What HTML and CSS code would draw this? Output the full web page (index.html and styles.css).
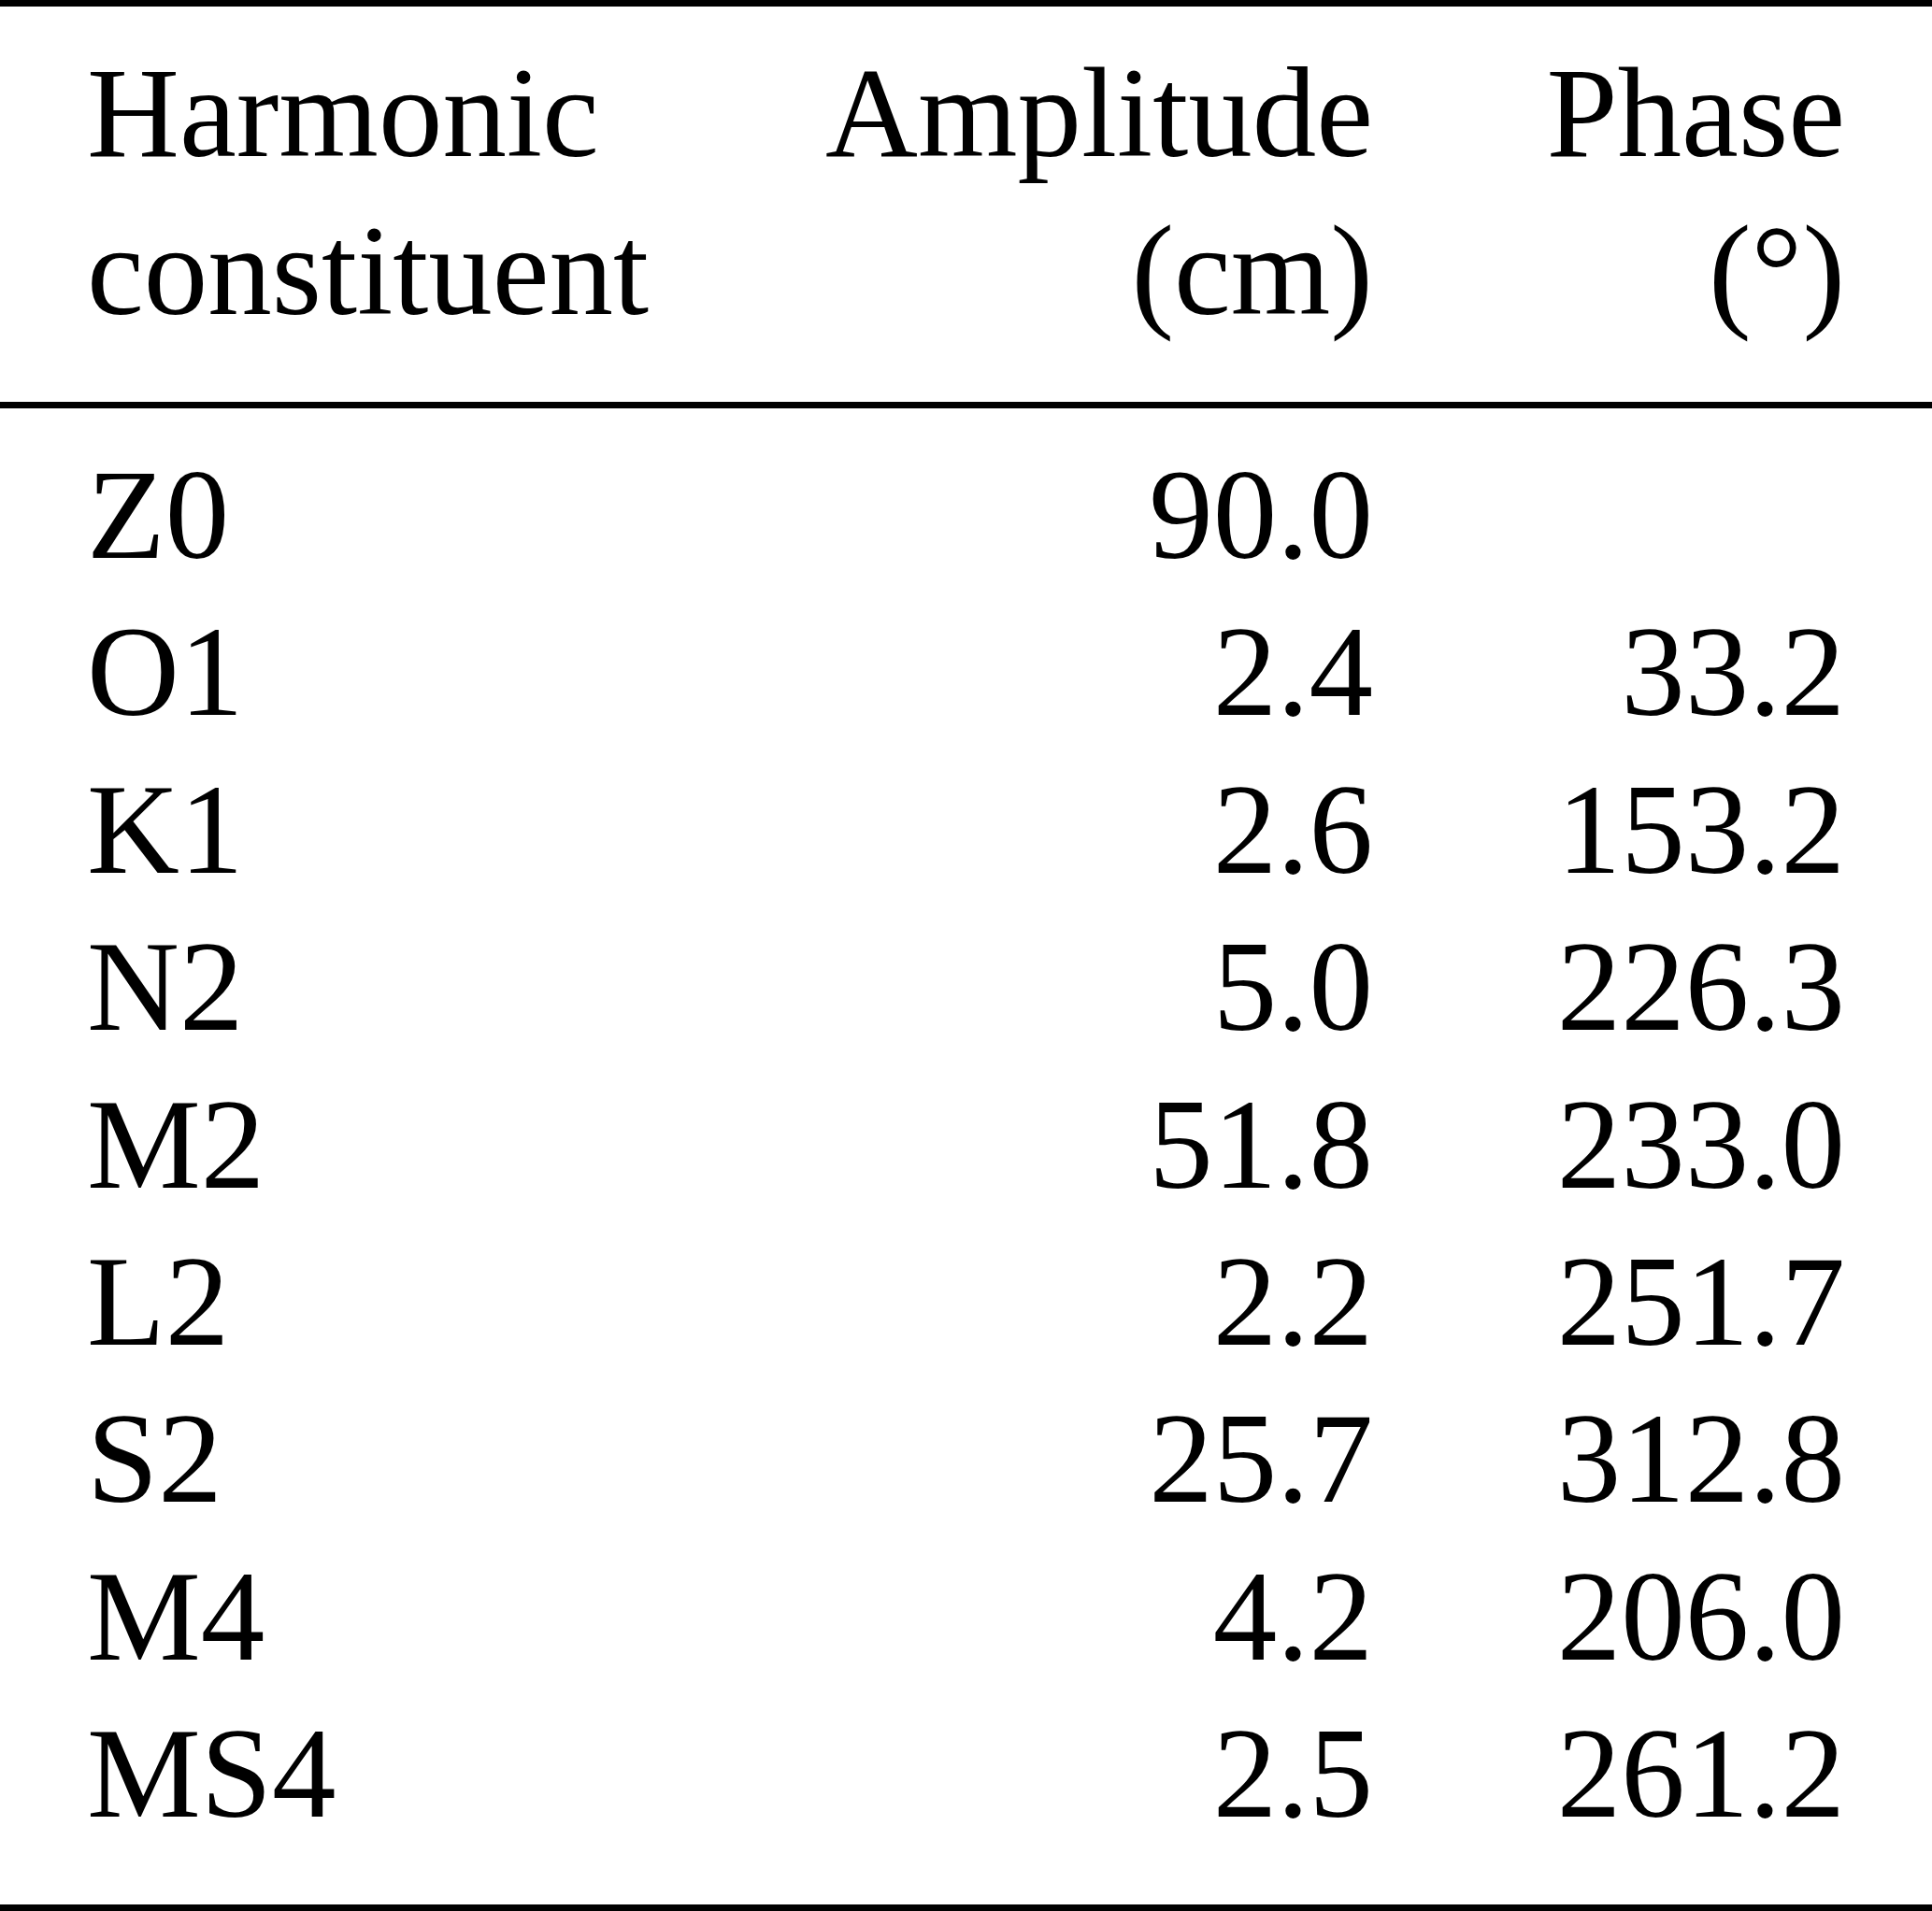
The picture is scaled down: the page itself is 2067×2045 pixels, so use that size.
FILE: index.html
```html
<!DOCTYPE html>
<html>
<head>
  <title>Harmonic constituents</title>
  <link rel="stylesheet" href="styles.css">
</head>
<body>
  <table class="tide-table">
    <colgroup>
      <col class="col-name">
      <col class="col-amp">
      <col class="col-phase">
    </colgroup>
    <thead>
      <tr>
        <th class="name">Harmonic<br>constituent</th>
        <th class="num">Amplitude<br>(cm)</th>
        <th class="num">Phase<br>(&deg;)</th>
      </tr>
    </thead>
    <tbody>
      <tr><td class="name">Z0</td><td class="num">90.0</td><td class="num"></td></tr>
      <tr><td class="name">O1</td><td class="num">2.4</td><td class="num">33.2</td></tr>
      <tr><td class="name">K1</td><td class="num">2.6</td><td class="num">153.2</td></tr>
      <tr><td class="name">N2</td><td class="num">5.0</td><td class="num">226.3</td></tr>
      <tr><td class="name">M2</td><td class="num">51.8</td><td class="num">233.0</td></tr>
      <tr><td class="name">L2</td><td class="num">2.2</td><td class="num">251.7</td></tr>
      <tr><td class="name">S2</td><td class="num">25.7</td><td class="num">312.8</td></tr>
      <tr><td class="name">M4</td><td class="num">4.2</td><td class="num">206.0</td></tr>
      <tr><td class="name">MS4</td><td class="num">2.5</td><td class="num">261.2</td></tr>
    </tbody>
  </table>
</body>
</html>
```

FILE: styles.css
```css
/* Page */
body {
  margin: 0;
  padding: 0;
  background-color: #ffffff;
  color: #000000;
  font-family: "Liberation Serif", "Times New Roman", serif;
}

/* Table with booktabs-style rules */
.tide-table {
  width: 100%;
  table-layout: fixed;
  border-collapse: separate;
  border-spacing: 0;
  border-top: 7px solid #000;
  border-bottom: 7px solid #000;
  font-size: 137px;
  line-height: 168.4px;
}

.col-name {
  width: 800px;
}

.col-amp {
  width: 669px;
}

.col-phase {
  width: 598px;
}

th,
td {
  padding: 0;
  font-weight: normal;
  white-space: nowrap;
}

th {
  line-height: 169px;
  padding-top: 30px;
  padding-bottom: 55px;
  border-bottom: 7px solid #000;
}

.name {
  text-align: left;
  padding-left: 93px;
}

.num {
  text-align: right;
}

th:last-child,
td:last-child {
  padding-right: 93px;
}

tbody tr:first-child td {
  padding-top: 30px;
}

tbody tr:last-child td {
  padding-bottom: 55px;
}
```
